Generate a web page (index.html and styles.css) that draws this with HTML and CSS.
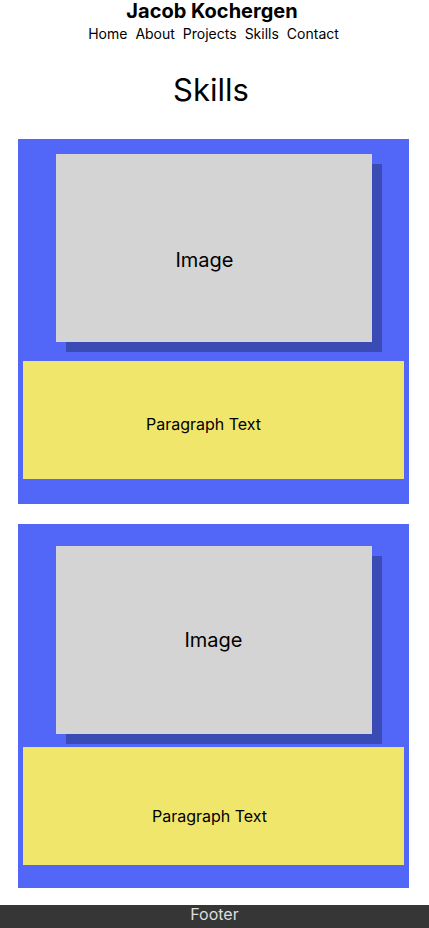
FILE: index.html
```html
<!DOCTYPE html>
<html lang="en">
<head>
<meta charset="UTF-8">
<meta name="viewport" content="width=device-width, initial-scale=1.0">
<title>Skills</title>
<link rel="stylesheet" href="styles.css">
</head>
<body>

<header class="header">
    <div class="name">Jacob Kochergen</div>
    <nav class="nav">
        <a href="#">Home</a>
        <a href="#">About</a>
        <a href="#">Projects</a>
        <a href="#">Skills</a>
        <a href="#">Contact</a>
    </nav>
</header>

<h1 class="title">Skills</h1>

<main class="skills">
    <section class="card card-first">
        <div class="image image-first">Image</div>
        <p class="text text-first">Paragraph Text</p>
    </section>

    <section class="card card-second">
        <div class="image">Image</div>
        <p class="text text-second">Paragraph Text</p>
    </section>
</main>

<footer class="footer">Footer</footer>

</body>
</html>
```

FILE: styles.css
```css
body {
    margin: 0;
    font-family: Inter, "Noto Sans", sans-serif;
    color: #000;
    background: #fff;
}

.header {
    text-align: center;
}

.name {
    padding-right: 5px;
    font-size: 20px;
    font-weight: 700;
    line-height: 22px;
}

.nav {
    display: flex;
    justify-content: center;
    gap: 8px;
    margin-top: 2px;
    padding-right: 2px;
    font-size: 14px;
    line-height: 20px;
}

.nav a {
    color: #000;
    text-decoration: none;
}

.title {
    margin: 26px 0 29px;
    padding-right: 7px;
    font-size: 31px;
    font-weight: 400;
    line-height: 40px;
    text-align: center;
}

.skills {
    display: flex;
    flex-direction: column;
    gap: 20px;
    margin: 0 20px 0 18px;
}

.card {
    background-color: #5267f7;
    padding: 15px 5px 25px;
}

.card-second {
    padding: 22px 5px 23px;
}

.image {
    display: flex;
    align-items: center;
    justify-content: center;
    box-sizing: border-box;
    width: 316px;
    height: 188px;
    margin: 0 auto 19px;
    background-color: #d4d4d4;
    box-shadow: 10px 10px 0 #3b4bb5;
    font-size: 20px;
}

.image-first {
    padding: 24px 18px 0 0;
}

.card-second .image {
    margin-bottom: 13px;
}

.text {
    display: flex;
    align-items: center;
    justify-content: center;
    box-sizing: border-box;
    height: 118px;
    margin: 0;
    background-color: #f0e66c;
    font-size: 16px;
}

.text-first {
    padding: 8px 20px 0 0;
}

.text-second {
    padding: 20px 8px 0 0;
}

.footer {
    margin-top: 17px;
    padding-bottom: 5px;
    background-color: #363636;
    color: #dedede;
    font-size: 16px;
    line-height: 18px;
    text-align: center;
}
```
